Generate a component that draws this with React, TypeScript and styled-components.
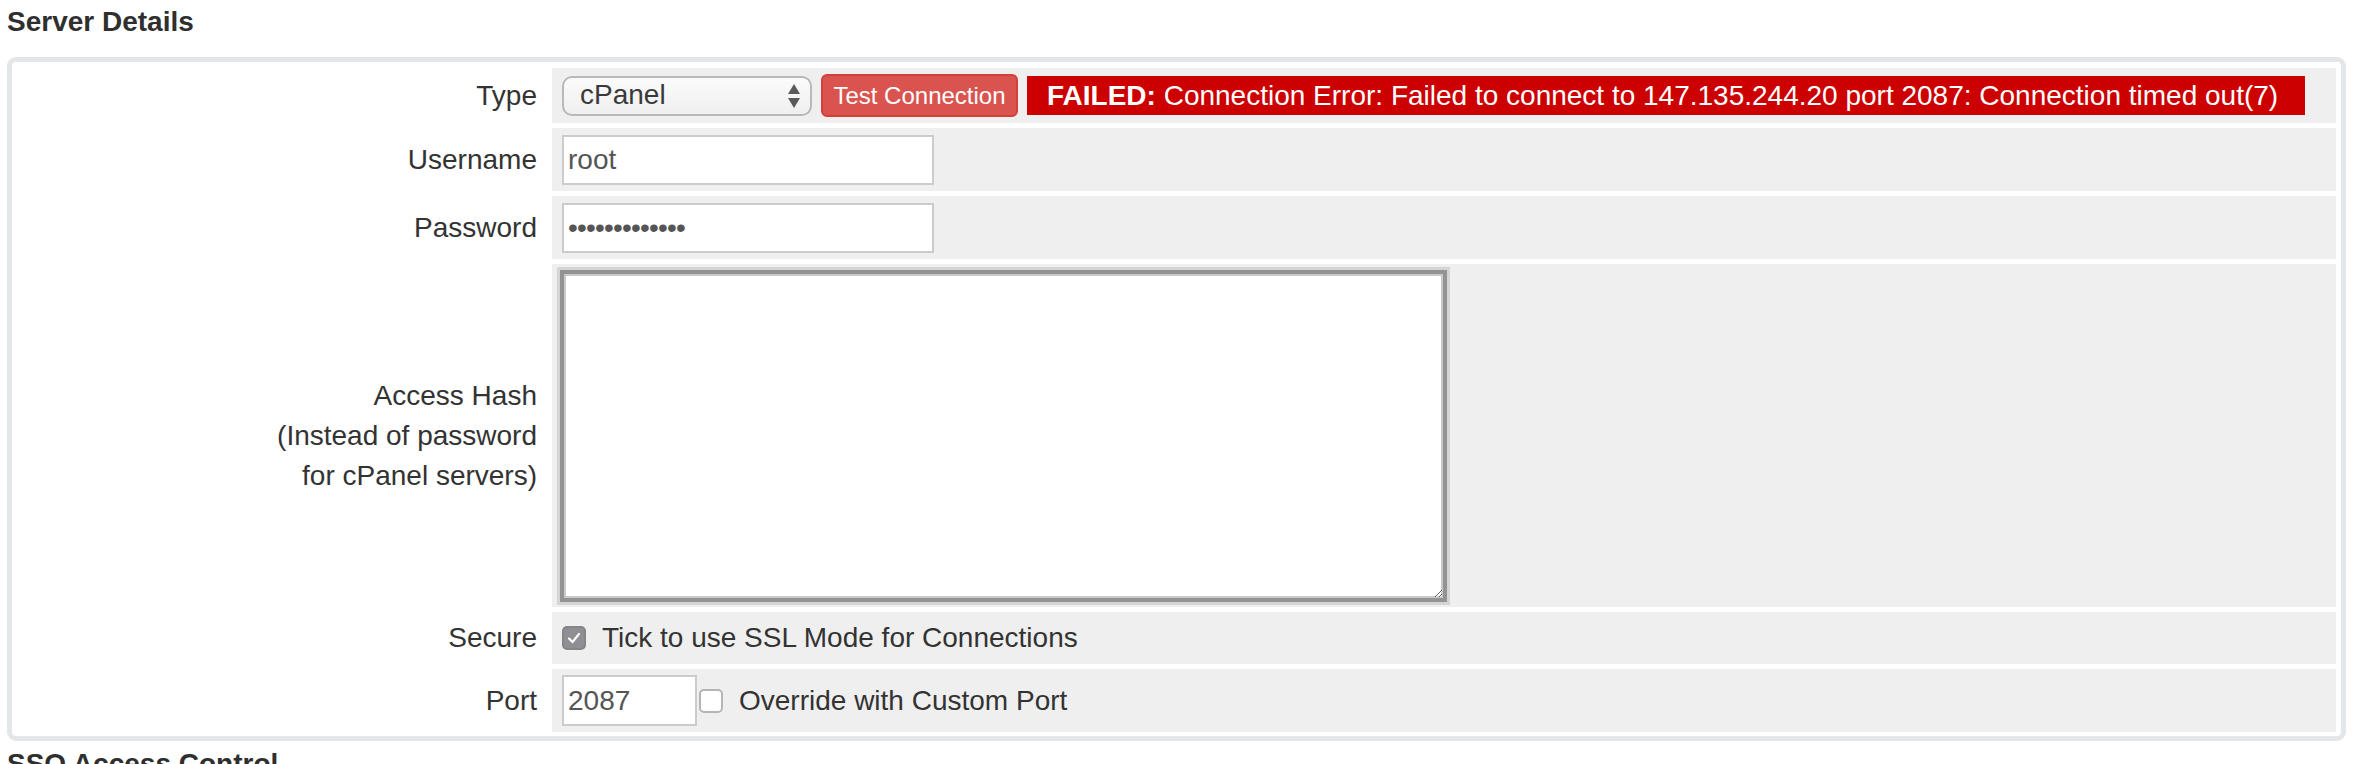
import React from "react";
import styled, { createGlobalStyle } from "styled-components";

const Global = createGlobalStyle`
  html, body { margin: 0; padding: 0; background: #ffffff; }
  body {
    font-family: "Liberation Sans", Arial, Helvetica, sans-serif;
    color: #333333;
    font-size: 28px;
    overflow: hidden;
  }
  * { box-sizing: border-box; }
`;

const Page = styled.div`
  width: 2346px;
  padding: 6px 0 0 7px;
`;

const Heading = styled.h3<{ $top?: number }>`
  margin: ${(p) => p.$top ?? 0}px 0 19px 0;
  font-size: 28px;
  line-height: 32px;
  font-weight: bold;
  color: #2f2f2f;
`;

const Box = styled.div`
  border: 5px solid #e3e7ea;
  border-radius: 9px;
  padding: 6px 5px 4px 4px;
  display: grid;
  grid-template-columns: 532px 1fr;
  grid-template-rows: 55px 63px 63px 343px 52px 63px;
  column-gap: 4px;
  row-gap: 5px;
`;

const Label = styled.div`
  display: flex;
  align-items: center;
  justify-content: flex-end;
  text-align: right;
  padding-right: 11px;
  font-size: 28px;
  line-height: 40px;
  color: #333333;
`;

const Field = styled.div<{ $gap?: number }>`
  background: #efefef;
  display: flex;
  align-items: center;
  padding-left: 10px;
  gap: ${(p) => p.$gap ?? 0}px;
  min-width: 0;
`;

const SelectWrap = styled.div`
  position: relative;
  width: 250px;
  height: 40px;
  margin-right: 9px;
`;

const Select = styled.select`
  appearance: none;
  -webkit-appearance: none;
  width: 100%;
  height: 100%;
  border: 2px solid #b9b9b9;
  border-radius: 10px;
  background: linear-gradient(#fbfbfb, #efefef);
  font-family: inherit;
  font-size: 28px;
  color: #3a3a3a;
  padding: 0 0 2px 16px;
  outline: none;
`;

const Arrows = styled.svg`
  position: absolute;
  right: 12px;
  top: 8px;
  pointer-events: none;
`;

const DangerButton = styled.button`
  width: 197px;
  height: 43px;
  margin-right: 9px;
  background: #d9534f;
  border: 2px solid #d43f3a;
  border-radius: 6px;
  color: #ffffff;
  font-family: inherit;
  font-size: 24px;
  padding: 0;
  cursor: pointer;
`;

const ErrorLabel = styled.span`
  height: 39px;
  width: 1278px;
  background: #cc0000;
  color: #ffffff;
  font-size: 28px;
  line-height: 39px;
  padding: 0 20px;
  white-space: nowrap;
  overflow: hidden;
`;

const TextInput = styled.input<{ $w: number; $h: number; $tight?: boolean }>`
  width: ${(p) => p.$w}px;
  height: ${(p) => p.$h}px;
  border: 2px solid #cbcbcb;
  background: #ffffff;
  font-family: inherit;
  font-size: 28px;
  letter-spacing: ${(p) => (p.$tight ? "-0.8px" : "normal")};
  color: #555555;
  padding: 0 0 0 4px;
  outline: none;
  border-radius: 0;
`;

const TextArea = styled.textarea`
  width: 887px;
  height: 332px;
  margin-left: -2px;
  border: 4px solid #939393;
  box-shadow: 0 0 0 3px #d5d5d5, inset 0 0 0 2px #c9c9c9;
  background: #ffffff;
  outline: none;
  font-family: inherit;
  font-size: 28px;
`;

const CheckLine = styled.label`
  display: flex;
  align-items: center;
  gap: 16px;
  font-size: 28px;
  color: #333333;
  cursor: pointer;
`;

const CheckBox = styled.span<{ $checked?: boolean }>`
  display: inline-flex;
  align-items: center;
  justify-content: center;
  width: 24px;
  height: 24px;
  border-radius: 5px;
  border: 2px solid ${(p) => (p.$checked ? "#848489" : "#b5b5b5")};
  background: ${(p) => (p.$checked ? "#8e8e93" : "#ffffff")};
`;

const PortField = styled(Field)`
  gap: 2px;
`;

const App: React.FC = () => (
  <Page>
    <Global />
    <Heading>Server Details</Heading>
    <Box>
      <Label>Type</Label>
      <Field>
        <SelectWrap>
          <Select defaultValue="cpanel">
            <option value="cpanel">cPanel</option>
            <option value="directadmin">DirectAdmin</option>
            <option value="plesk">Plesk</option>
          </Select>
          <Arrows width="12" height="24" viewBox="0 0 12 24">
            <polygon points="0,10 6,0 12,10" fill="#5a5a5a" />
            <polygon points="0,14 6,24 12,14" fill="#5a5a5a" />
          </Arrows>
        </SelectWrap>
        <DangerButton type="button">Test Connection</DangerButton>
        <ErrorLabel>
          <b>FAILED:</b> Connection Error: Failed to connect to 147.135.244.20 port 2087: Connection timed out(7)
        </ErrorLabel>
      </Field>

      <Label>Username</Label>
      <Field>
        <TextInput $w={372} $h={50} type="text" defaultValue="root" />
      </Field>

      <Label>Password</Label>
      <Field>
        <TextInput $w={372} $h={50} $tight type="password" defaultValue="secretpasswd1" />
      </Field>

      <Label>
        Access Hash
        <br />
        (Instead of password
        <br />
        for cPanel servers)
      </Label>
      <Field>
        <TextArea />
      </Field>

      <Label>Secure</Label>
      <Field>
        <CheckLine>
          <CheckBox $checked>
            <svg width="14" height="12" viewBox="0 0 14 12">
              <path d="M2 6.5 L5.5 10 L12 2" stroke="#ffffff" strokeWidth="2.2" fill="none" strokeLinecap="round" strokeLinejoin="round" />
            </svg>
          </CheckBox>
          Tick to use SSL Mode for Connections
        </CheckLine>
      </Field>

      <Label>Port</Label>
      <PortField>
        <TextInput $w={135} $h={51} type="text" defaultValue="2087" />
        <CheckLine>
          <CheckBox />
          Override with Custom Port
        </CheckLine>
      </PortField>
    </Box>
    <Heading $top={7}>SSO Access Control</Heading>
  </Page>
);

export default App;
